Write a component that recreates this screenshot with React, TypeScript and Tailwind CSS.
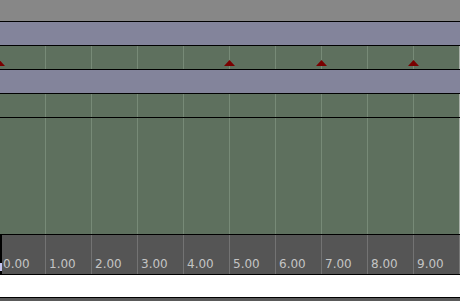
import React from "react";

const Marker = ({ left }: { left: number }) => (
  <svg
    className="absolute top-[14px]"
    style={{ left }}
    width="11"
    height="6"
    viewBox="0 0 11 6"
  >
    <polygon points="5.5,0 11,6 0,6" fill="#7a0000" />
  </svg>
);

const grid =
  "bg-[repeating-linear-gradient(90deg,transparent_0px,transparent_45px,#778a77_45px,#778a77_46px)]";

export default function App() {
  const labels = ["0.00", "1.00", "2.00", "3.00", "4.00", "5.00", "6.00", "7.00", "8.00", "9.00"];
  return (
    <div className="w-[460px] h-[301px] overflow-hidden flex flex-col bg-white font-['DejaVu_Sans',sans-serif]">
      <div className="h-[22px] shrink-0 bg-[#878787] border-b border-black" />
      <div className="h-[24px] shrink-0 bg-[#83849b] border-b border-black" />
      <div className="h-[24px] shrink-0 flex border-b border-black">
        <div className={`relative flex-1 bg-[#5e705e] ${grid} overflow-hidden`}>
          <Marker left={-6} />
          <Marker left={224} />
          <Marker left={316} />
          <Marker left={408} />
        </div>
        <div className="w-[1px] bg-[#a8b0a8]" />
      </div>
      <div className="h-[24px] shrink-0 bg-[#83849b] border-b border-black" />
      <div className="h-[24px] shrink-0 flex border-b border-black">
        <div className={`flex-1 bg-[#5e705e] ${grid}`} />
        <div className="w-[1px] bg-[#a8b0a8]" />
      </div>
      <div className="h-[117px] shrink-0 flex border-b border-black">
        <div className={`flex-1 bg-[#5e705e] ${grid}`} />
        <div className="w-[1px] bg-[#a8b0a8]" />
      </div>
      <div className="h-[40px] shrink-0 flex border-b border-black">
        <div className="w-[2px] flex flex-col bg-black">
          <div className="flex-1" />
          <div className="h-[8px] mb-[3px] bg-[#c4c4ee]" />
        </div>
        <div className="flex-1 flex bg-[#555555] overflow-hidden">
          {labels.map((l, i) => (
            <div
              key={l}
              className={`${i === 0 ? "w-[44px] pl-[1px]" : "w-[46px] pl-[3px]"} shrink-0 border-r border-[#737373] pt-[23px] text-[12px] leading-[12px] text-[#c4c4c4]`}
            >
              {l}
            </div>
          ))}
        </div>
        <div className="w-[1px] bg-[#777777]" />
      </div>
      <div className="h-[23px] shrink-0 bg-white border-b border-black" />
      <div className="flex-1 bg-[#5a5a5a]" />
    </div>
  );
}
